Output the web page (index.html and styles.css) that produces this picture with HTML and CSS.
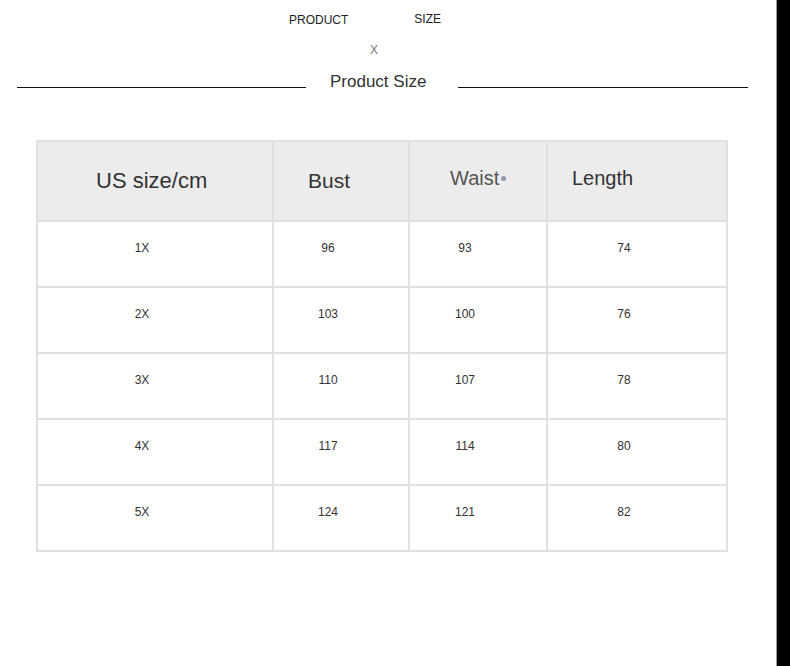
FILE: index.html
```html
<!DOCTYPE html>
<html>
<head>
<meta charset="utf-8">
<link rel="stylesheet" href="styles.css">
</head>
<body>
<div class="page">
  <main class="main">
    <div class="labels">
      <span class="lab lab-product">PRODUCT</span>
      <span class="lab lab-size">SIZE</span>
    </div>
    <div class="x">X</div>
    <div class="title-row">
      <span class="rule rule-left"></span>
      <h1 class="title">Product Size</h1>
      <span class="rule rule-right"></span>
    </div>
    <table class="sizes">
      <colgroup>
        <col class="c1"><col class="c2"><col class="c3"><col class="c4">
      </colgroup>
      <thead>
        <tr>
          <th class="h1">US size/cm</th>
          <th class="h2">Bust</th>
          <th class="h3">Waist<span class="dot"></span></th>
          <th class="h4">Length</th>
        </tr>
      </thead>
      <tbody>
        <tr><td>1X</td><td>96</td><td>93</td><td>74</td></tr>
        <tr><td>2X</td><td>103</td><td>100</td><td>76</td></tr>
        <tr><td>3X</td><td>110</td><td>107</td><td>78</td></tr>
        <tr><td>4X</td><td>117</td><td>114</td><td>80</td></tr>
        <tr><td>5X</td><td>124</td><td>121</td><td>82</td></tr>
      </tbody>
    </table>
  </main>
  <div class="edge"></div>
</div>
</body>
</html>
```
FILE: styles.css
```css
html, body {
  margin: 0;
  padding: 0;
  background: #fff;
}
body {
  font-family: "Liberation Sans", Arial, sans-serif;
  color: #333;
}
.page {
  display: flex;
  height: 666px;
  overflow: hidden;
}
.main {
  flex: 1;
  min-width: 0;
}
.edge {
  width: 13px;
  background: #000;
  border-left: 1px solid #9a9a9a;
}
.labels {
  display: flex;
  align-items: flex-start;
  padding-left: 289px;
  padding-top: 13px;
  height: 14px;
}
.lab {
  font-size: 12px;
  line-height: 14px;
  color: #222;
}
.lab-size {
  margin-left: 66px;
  margin-top: -1px;
}
.x {
  padding-left: 370px;
  margin-top: 16px;
  font-size: 12px;
  line-height: 14px;
  color: #777;
}
.title-row {
  display: flex;
  align-items: center;
  margin-top: 15px;
  padding-left: 17px;
  height: 20px;
}
.rule {
  display: block;
  height: 1px;
  background: #111;
  margin-top: 11px;
}
.rule-left { width: 289px; }
.rule-right { width: 290px; }
.title {
  margin: 0 32px 0 24px;
  font-size: 17px;
  font-weight: normal;
  line-height: 20px;
  color: #333;
}
.sizes {
  margin-top: 48px;
  margin-left: 36px;
  width: 690px;
  table-layout: fixed;
  border-collapse: collapse;
  border: 2px solid #e0e0e0;
}
.c1 { width: 236px; }
.c2 { width: 136px; }
.c3 { width: 138px; }
.c4 { width: 180px; }
.sizes th, .sizes td {
  border: 2px solid #e0e0e0;
  padding: 0;
}
.sizes thead tr { height: 80px; }
.sizes th {
  background: #ececec;
  font-weight: normal;
  color: #333;
  text-align: left;
}
.h1 { font-size: 22px; padding-left: 58px !important; padding-top: 0 !important; }
.h2 { font-size: 21px; padding-left: 34px !important; padding-top: 0 !important; }
.h3 { font-size: 20px; padding-left: 40px !important; padding-bottom: 6px !important; color: #555 !important; }
.h4 { font-size: 20px; padding-left: 24px !important; padding-bottom: 6px !important; }
.dot {
  display: inline-block;
  width: 5px;
  height: 5px;
  border-radius: 50%;
  background: #8a9ab0;
  margin-left: 2px;
  vertical-align: 4px;
}
.sizes tbody tr { height: 66px; }
.sizes td {
  font-size: 12px;
  text-align: center;
  vertical-align: middle;
  padding-right: 26px;
  padding-bottom: 12px;
  color: #333;
}
```
